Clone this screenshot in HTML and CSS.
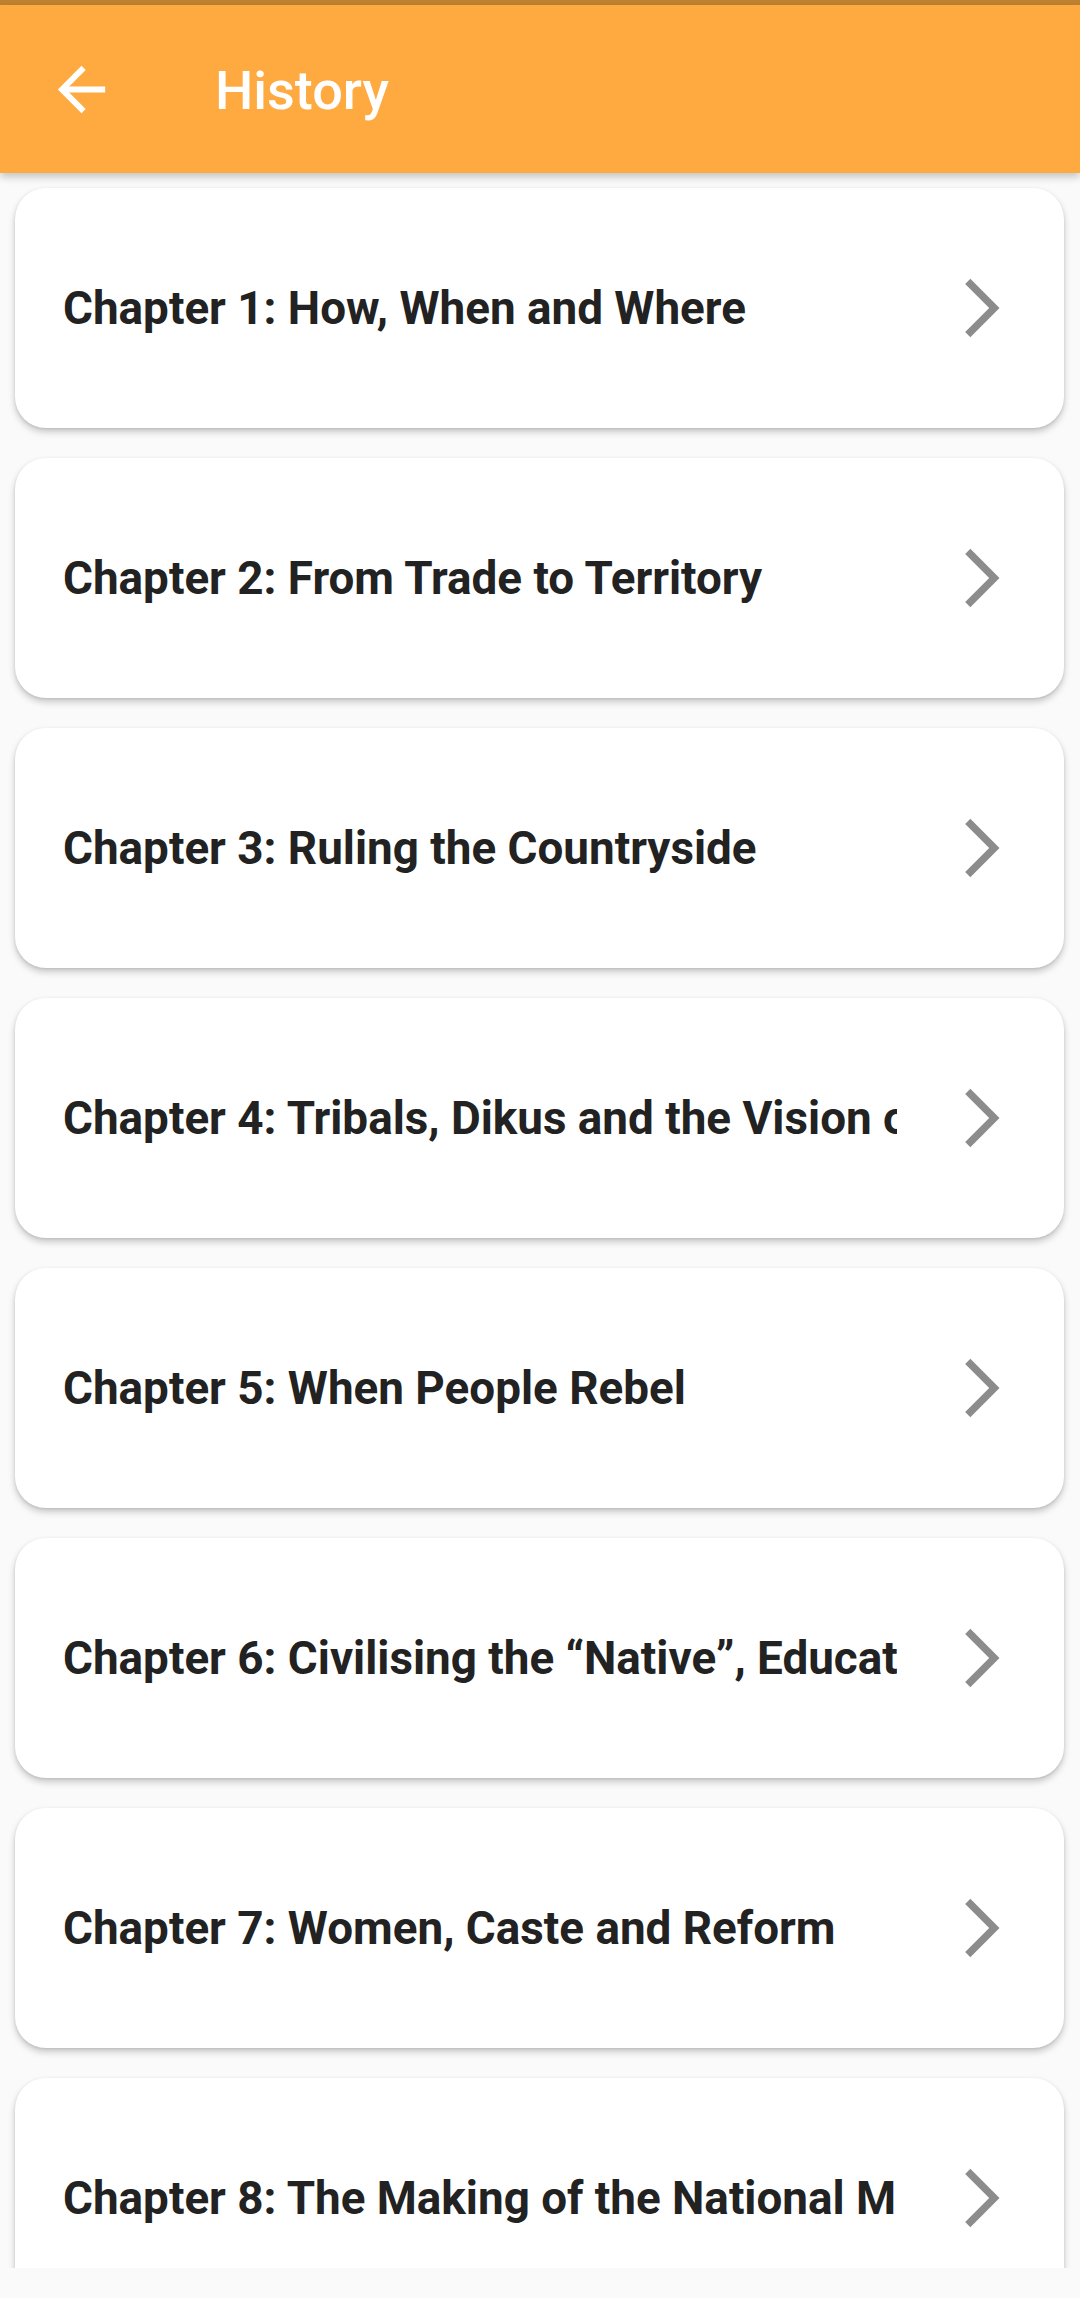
FILE: index.html
```html
<!DOCTYPE html>
<html lang="en">
<head>
    <meta charset="UTF-8">
    <title>History</title>
    <link rel="stylesheet" href="styles.css">
</head>
<body>
    <div class="screen">
        <div class="status-bar"></div>

        <header class="app-bar">
            <button class="back-button" aria-label="Back">
                <svg viewBox="0 0 24 24" class="back-icon">
                    <path d="M20 11H7.83l5.59-5.59L12 4l-8 8 8 8 1.41-1.41L7.83 13H20v-2z"/>
                </svg>
            </button>
            <h1 class="app-title">History</h1>
        </header>

        <main class="chapter-list">
            <div class="chapter-card">
                <span class="chapter-title">Chapter 1: How, When and Where</span>
                <svg viewBox="0 0 24 24" class="chevron"><path d="M6.23 20.23L8 22l10-10L8 2 6.23 3.77 14.46 12z"/></svg>
            </div>
            <div class="chapter-card">
                <span class="chapter-title">Chapter 2: From Trade to Territory</span>
                <svg viewBox="0 0 24 24" class="chevron"><path d="M6.23 20.23L8 22l10-10L8 2 6.23 3.77 14.46 12z"/></svg>
            </div>
            <div class="chapter-card">
                <span class="chapter-title">Chapter 3: Ruling the Countryside</span>
                <svg viewBox="0 0 24 24" class="chevron"><path d="M6.23 20.23L8 22l10-10L8 2 6.23 3.77 14.46 12z"/></svg>
            </div>
            <div class="chapter-card">
                <span class="chapter-title">Chapter 4: Tribals, Dikus and the Vision of a Golden Age</span>
                <svg viewBox="0 0 24 24" class="chevron"><path d="M6.23 20.23L8 22l10-10L8 2 6.23 3.77 14.46 12z"/></svg>
            </div>
            <div class="chapter-card">
                <span class="chapter-title">Chapter 5: When People Rebel</span>
                <svg viewBox="0 0 24 24" class="chevron"><path d="M6.23 20.23L8 22l10-10L8 2 6.23 3.77 14.46 12z"/></svg>
            </div>
            <div class="chapter-card">
                <span class="chapter-title">Chapter 6: Civilising the “Native”, Educating the Nation</span>
                <svg viewBox="0 0 24 24" class="chevron"><path d="M6.23 20.23L8 22l10-10L8 2 6.23 3.77 14.46 12z"/></svg>
            </div>
            <div class="chapter-card">
                <span class="chapter-title">Chapter 7: Women, Caste and Reform</span>
                <svg viewBox="0 0 24 24" class="chevron"><path d="M6.23 20.23L8 22l10-10L8 2 6.23 3.77 14.46 12z"/></svg>
            </div>
            <div class="chapter-card">
                <span class="chapter-title">Chapter 8: The Making of the National Movement</span>
                <svg viewBox="0 0 24 24" class="chevron"><path d="M6.23 20.23L8 22l10-10L8 2 6.23 3.77 14.46 12z"/></svg>
            </div>
        </main>

        <div class="nav-bar"></div>
    </div>
</body>
</html>
```

FILE: styles.css
```css
* {
    margin: 0;
    padding: 0;
    box-sizing: border-box;
}
body {
    background: #fafafa;
    font-family: Roboto, "Noto Sans", sans-serif;
}
.screen {
    width: 1080px;
    height: 2298px;
    display: flex;
    flex-direction: column;
    overflow: hidden;
}
.status-bar {
    height: 5px;
    background: #bf8231;
    flex-shrink: 0;
}
/* Thanh tiêu đề */
.app-bar {
    height: 168px;
    flex-shrink: 0;
    background: #ffaa41;
    display: flex;
    align-items: center;
    padding-left: 46px;
    box-shadow: 0 4px 8px rgba(0, 0, 0, 0.22);
    position: relative;
    z-index: 2;
}
.back-button {
    width: 71px;
    height: 71px;
    background: none;
    border: none;
    display: flex;
}
.back-icon {
    width: 71px;
    height: 71px;
    fill: #fff;
}
.app-title {
    margin-left: 98px;
    color: #fff;
    font-size: 54px;
    font-weight: 500;
    margin-top: 2px;
}
/* Danh sách chương */
.chapter-list {
    flex: 1;
    overflow: hidden;
    display: flex;
    flex-direction: column;
    gap: 30px;
    padding: 15px 16px 0 15px;
}
.chapter-card {
    height: 240px;
    flex-shrink: 0;
    background: #fff;
    border-radius: 31px;
    display: flex;
    align-items: center;
    padding: 0 47px 0 48px;
    box-shadow: 0 4px 7px rgba(0, 0, 0, 0.2), 0 1px 3px rgba(0, 0, 0, 0.1);
}
.chapter-title {
    flex: 1;
    overflow: hidden;
    white-space: nowrap;
    font-size: 45.8px;
    font-weight: 700;
    color: #222;
    margin-top: 1px;
}
.chevron {
    width: 70px;
    height: 70px;
    margin-left: 50px;
    fill: #8c8c8c;
    flex-shrink: 0;
}
.nav-bar {
    height: 30px;
    flex-shrink: 0;
    background: #fafafa;
}
```
